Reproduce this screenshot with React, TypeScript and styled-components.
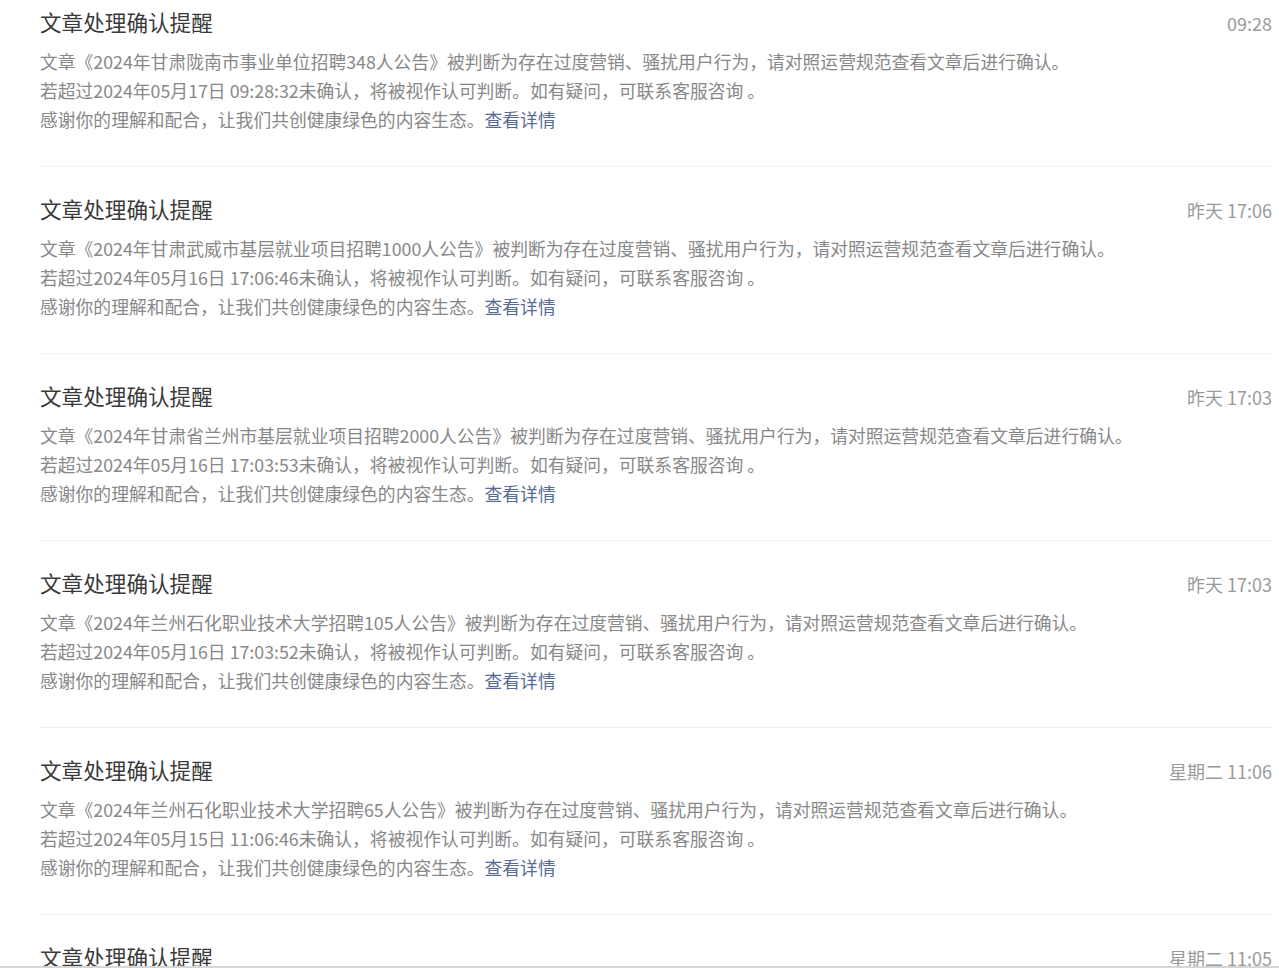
import React from "react";
import styled, { createGlobalStyle } from "styled-components";

const Global = createGlobalStyle`
  html, body { margin: 0; padding: 0; background: #fff; overflow: hidden; }
  body { font-family: "Noto Sans CJK SC", "Noto Sans", sans-serif; }
`;

const List = styled.div`
  padding: 0 7px 0 40px;
`;

const Item = styled.div`
  padding-bottom: 32px;
  border-bottom: 1px solid #efefef;
  & + & { padding-top: 20px; }
`;

const Head = styled.div`
  display: flex;
  justify-content: space-between;
  align-items: baseline;
  height: 47px;
  line-height: 43px;
`;

const Title = styled.div`
  font-size: 21.6px;
  font-weight: 400;
  color: #3a3a3a;
`;

const Time = styled.div`
  font-size: 18px;
  color: #9a9a9a;
`;

const Body = styled.div`
  font-size: 17.8px;
  line-height: 29px;
  color: #888;
`;

const Line = styled.div`
  white-space: nowrap;
`;

const Link = styled.a`
  color: #576b95;
  text-decoration: none;
  cursor: pointer;
`;

const BottomBar = styled.div`
  position: fixed;
  left: 0;
  right: 0;
  bottom: 0;
  height: 2px;
  background: #d6d6d6;
`;

const data = [
  { time: "09:28", title: "2024年甘肃陇南市事业单位招聘348人公告", deadline: "2024年05月17日 09:28:32" },
  { time: "昨天 17:06", title: "2024年甘肃武威市基层就业项目招聘1000人公告", deadline: "2024年05月16日 17:06:46" },
  { time: "昨天 17:03", title: "2024年甘肃省兰州市基层就业项目招聘2000人公告", deadline: "2024年05月16日 17:03:53" },
  { time: "昨天 17:03", title: "2024年兰州石化职业技术大学招聘105人公告", deadline: "2024年05月16日 17:03:52" },
  { time: "星期二 11:06", title: "2024年兰州石化职业技术大学招聘65人公告", deadline: "2024年05月15日 11:06:46" },
  { time: "星期二 11:05", title: "2024年兰州石化职业技术大学招聘65人公告", deadline: "2024年05月15日 11:05:30" },
];

export default function App() {
  return (
    <>
      <Global />
      <List>
        {data.map((d, i) => (
          <Item key={i}>
            <Head>
              <Title>文章处理确认提醒</Title>
              <Time>{d.time}</Time>
            </Head>
            <Body>
              <Line>文章《{d.title}》被判断为存在过度营销、骚扰用户行为，请对照运营规范查看文章后进行确认。</Line>
              <Line>若超过{d.deadline}未确认，将被视作认可判断。如有疑问，可联系客服咨询 。</Line>
              <Line>感谢你的理解和配合，让我们共创健康绿色的内容生态。<Link>查看详情</Link></Line>
            </Body>
          </Item>
        ))}
      </List>
      <BottomBar />
    </>
  );
}
